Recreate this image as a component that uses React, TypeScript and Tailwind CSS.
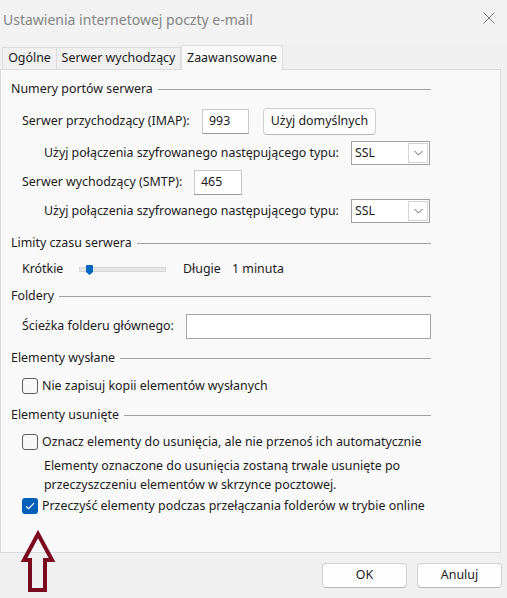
import React from 'react';

const Section: React.FC<{ title: string; className?: string }> = ({ title, className = '' }) => (
    <div className={`flex h-[20px] items-center ${className}`}>
        <span>{title}</span>
        <div className="ml-[5px] h-px flex-1 bg-[#a0a0a0]" />
    </div>
);

const TextBox: React.FC<{ value?: string; className?: string }> = ({ value = '', className = '' }) => (
    <div className={`flex h-[25px] items-center border border-[#c8c8c8] border-b-[#9a9a9a] bg-white px-[6px] ${className}`}>
        {value}
    </div>
);

const Select: React.FC<{ value: string }> = ({ value }) => (
    <div className="flex h-[24px] w-[79px] items-center justify-between border border-[#a0a0a0] bg-white pl-[3px] pr-[1px]">
        <span>{value}</span>
        <div className="flex h-[20px] w-[20px] items-center justify-center border border-[#d4d4d4] bg-white">
            <svg width="9" height="6" viewBox="0 0 9 6" fill="none">
                <path d="M0.5 1 L4.5 5 L8.5 1" stroke="#606060" strokeWidth="1" />
            </svg>
        </div>
    </div>
);

const Checkbox: React.FC<{ checked?: boolean; label: string; className?: string }> = ({ checked, label, className = '' }) => (
    <div className={`flex h-[20px] items-center pl-[11px] ${className}`}>
        {checked ? (
            <div className="flex h-[16px] w-[16px] items-center justify-center rounded-[3px] bg-[#005fb8]">
                <svg width="10" height="8" viewBox="0 0 10 8" fill="none">
                    <path d="M1 4.2 L3.6 6.6 L9 1.2" stroke="white" strokeWidth="1.2" />
                </svg>
            </div>
        ) : (
            <div className="h-[16px] w-[16px] rounded-[3px] border border-[#5f5f5f] bg-[#f7f7f7]" />
        )}
        <span className="ml-[4px]">{label}</span>
    </div>
);

const Button: React.FC<{ label: string; className?: string }> = ({ label, className = '' }) => (
    <div className={`flex items-center justify-center rounded-[4px] border border-[#d0d0d0] border-b-[#b8b8b8] bg-[#fdfdfd] ${className}`}>
        {label}
    </div>
);

const App: React.FC = () => {
    return (
        <div className="relative h-[598px] w-[507px] overflow-hidden bg-[#f0f0f0] font-['Noto_Sans',sans-serif] text-[12.4px] text-[#1b1b1b]">
            {/* title bar */}
            <div className="flex h-[45px] items-start justify-between bg-[#f2f2f2] pl-[3px] pr-[12px] pt-[9px]">
                <span className="text-[14px] text-[#858585]">Ustawienia internetowej poczty e-mail</span>
                <svg className="mt-[3px]" width="12" height="12" viewBox="0 0 12 12" fill="none">
                    <path d="M0.5 0.5 L11.5 11.5 M11.5 0.5 L0.5 11.5" stroke="#7a7a7a" strokeWidth="1" />
                </svg>
            </div>

            {/* tabs */}
            <div className="flex h-[24px] items-end pl-[2px]">
                <div className="flex h-[22px] w-[55px] items-center justify-center border border-b-0 border-[#dcdcdc] bg-[#f0f0f0]">Ogólne</div>
                <div className="flex h-[22px] w-[124px] items-center justify-center border-y border-r border-b-0 border-[#dcdcdc] bg-[#f0f0f0]">Serwer wychodzący</div>
                <div className="relative z-10 -mb-px flex h-[25px] w-[102px] items-center justify-center border border-b-0 border-[#dcdcdc] bg-[#f9f9f9]">Zaawansowane</div>
            </div>

            {/* tab page */}
            <div className="h-[484px] w-[501px] border border-[#dadada] bg-[#f9f9f9]">
                <div className="w-[430px] pl-[10px]">
                    <Section title="Numery portów serwera" className="mt-[9px]" />

                    <div className="mt-[8px] flex h-[28px] items-center pl-[11px]">
                        <span className="w-[180px]">Serwer przychodzący (IMAP):</span>
                        <TextBox value="993" className="w-[47px]" />
                        <Button label="Użyj domyślnych" className="ml-[14px] h-[27px] w-[113px]" />
                    </div>
                    <div className="mt-[6px] flex h-[24px] items-center pl-[33px]">
                        <span className="w-[307px]">Użyj połączenia szyfrowanego następującego typu:</span>
                        <Select value="SSL" />
                    </div>
                    <div className="mt-[4px] flex h-[26px] items-center pl-[11px]">
                        <span className="w-[172px]">Serwer wychodzący (SMTP):</span>
                        <TextBox value="465" className="w-[48px]" />
                    </div>
                    <div className="mt-[4px] flex h-[24px] items-center pl-[33px]">
                        <span className="w-[307px]">Użyj połączenia szyfrowanego następującego typu:</span>
                        <Select value="SSL" />
                    </div>

                    <Section title="Limity czasu serwera" className="mt-[10px]" />
                    <div className="mt-[6px] flex h-[20px] items-center pl-[11px]">
                        <span className="w-[57px]">Krótkie</span>
                        <div className="relative h-[5px] w-[87px] border border-[#d6d6d6] bg-[#e6e6e6]">
                            <svg className="absolute left-[6px] top-[-3px]" width="7" height="10" viewBox="0 0 7 10">
                                <path d="M0 1 Q0 0 1 0 L6 0 Q7 0 7 1 L7 7 L3.5 10 L0 7 Z" fill="#0067c0" />
                            </svg>
                        </div>
                        <span className="ml-[17px] w-[49px]">Długie</span>
                        <span>1 minuta</span>
                    </div>

                    <Section title="Foldery" className="mt-[7px]" />
                    <div className="mt-[7px] flex h-[26px] items-center pl-[11px]">
                        <span className="w-[164px]">Ścieżka folderu głównego:</span>
                        <div className="h-[25px] flex-1 border border-[#a5a5a5] bg-white" />
                    </div>

                    <Section title="Elementy wysłane" className="mt-[9px]" />
                    <Checkbox label="Nie zapisuj kopii elementów wysłanych" className="mt-[8px]" />

                    <Section title="Elementy usunięte" className="mt-[9px]" />
                    <Checkbox label="Oznacz elementy do usunięcia, ale nie przenoś ich automatycznie" className="mt-[7px]" />
                    <div className="mt-[4px] pl-[33px] leading-[19px]">
                        <div>Elementy oznaczone do usunięcia zostaną trwale usunięte po</div>
                        <div>przeczyszczeniu elementów w skrzynce pocztowej.</div>
                    </div>
                    <Checkbox checked label="Przeczyść elementy podczas przełączania folderów w trybie online" className="mt-[2px]" />
                </div>
            </div>

            {/* footer buttons */}
            <div className="mt-[10px] flex justify-end gap-[10px] pr-[5px]">
                <Button label="OK" className="h-[25px] w-[85px]" />
                <Button label="Anuluj" className="h-[25px] w-[85px]" />
            </div>

            {/* pointer arrow */}
            <svg className="absolute left-[20px] top-[528px]" width="36" height="68" viewBox="0 0 36 68" fill="none">
                <path d="M18 6 L32 32 L25 32 L25 62 L10 62 L10 32 L4 32 Z" stroke="#7b0a1f" strokeWidth="4" strokeLinejoin="miter" />
            </svg>
        </div>
    );
};

export default App;
